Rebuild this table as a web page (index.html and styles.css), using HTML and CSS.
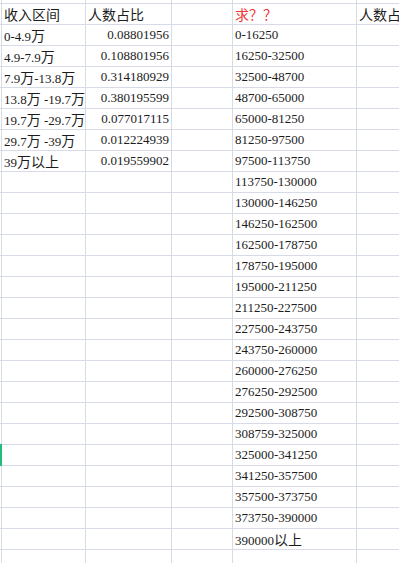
FILE: index.html
```html
<!DOCTYPE html>
<html lang="zh-CN">
<head>
<meta charset="utf-8">
<title>收入区间</title>
<link rel="stylesheet" href="styles.css">
</head>
<body>
<div class="sheet">
  <div class="row-sel"></div>
  <div class="grid">
    <div></div><div></div><div></div><div></div><div></div><div></div>

    <div></div><div class="c"><span class="zh">收入区间</span></div><div class="c"><span class="zh">人数占比</span></div><div></div><div class="c red"><span class="zh">求？？</span></div><div class="c"><span class="zh">人数占比</span></div>

    <div></div><div class="c">0-4.9<span class="zh">万</span></div><div class="c num">0.08801956</div><div></div><div class="c">0-16250</div><div></div>
    <div></div><div class="c">4.9-7.9<span class="zh">万</span></div><div class="c num">0.108801956</div><div></div><div class="c">16250-32500</div><div></div>
    <div></div><div class="c">7.9<span class="zh">万</span>-13.8<span class="zh">万</span></div><div class="c num">0.314180929</div><div></div><div class="c">32500-48700</div><div></div>
    <div></div><div class="c">13.8<span class="zh">万</span> -19.7<span class="zh">万</span></div><div class="c num">0.380195599</div><div></div><div class="c">48700-65000</div><div></div>
    <div></div><div class="c">19.7<span class="zh">万</span> -29.7<span class="zh">万</span></div><div class="c num">0.077017115</div><div></div><div class="c">65000-81250</div><div></div>
    <div></div><div class="c">29.7<span class="zh">万</span> -39<span class="zh">万</span></div><div class="c num">0.012224939</div><div></div><div class="c">81250-97500</div><div></div>
    <div></div><div class="c">39<span class="zh">万以上</span></div><div class="c num">0.019559902</div><div></div><div class="c">97500-113750</div><div></div>

    <div></div><div></div><div></div><div></div><div class="c">113750-130000</div><div></div>
    <div></div><div></div><div></div><div></div><div class="c">130000-146250</div><div></div>
    <div></div><div></div><div></div><div></div><div class="c">146250-162500</div><div></div>
    <div></div><div></div><div></div><div></div><div class="c">162500-178750</div><div></div>
    <div></div><div></div><div></div><div></div><div class="c">178750-195000</div><div></div>
    <div></div><div></div><div></div><div></div><div class="c">195000-211250</div><div></div>
    <div></div><div></div><div></div><div></div><div class="c">211250-227500</div><div></div>
    <div></div><div></div><div></div><div></div><div class="c">227500-243750</div><div></div>
    <div></div><div></div><div></div><div></div><div class="c">243750-260000</div><div></div>
    <div></div><div></div><div></div><div></div><div class="c">260000-276250</div><div></div>
    <div></div><div></div><div></div><div></div><div class="c">276250-292500</div><div></div>
    <div></div><div></div><div></div><div></div><div class="c">292500-308750</div><div></div>
    <div></div><div></div><div></div><div></div><div class="c">308759-325000</div><div></div>
    <div></div><div></div><div></div><div></div><div class="c">325000-341250</div><div></div>
    <div></div><div></div><div></div><div></div><div class="c">341250-357500</div><div></div>
    <div></div><div></div><div></div><div></div><div class="c">357500-373750</div><div></div>
    <div></div><div></div><div></div><div></div><div class="c">373750-390000</div><div></div>
    <div></div><div></div><div></div><div></div><div class="c">390000<span class="zh">以上</span></div><div></div>

    <div></div><div></div><div></div><div></div><div></div><div></div>
  </div>
</div>
</body>
</html>
```

FILE: styles.css
```css
html, body {
  margin: 0;
  padding: 0;
  background: #ffffff;
  overflow: hidden;
}

.sheet {
  position: relative;
  width: 399px;
  height: 563px;
  overflow: hidden;
}

.grid {
  display: grid;
  width: 399px;
  grid-template-columns: 1px 83px 85px 60px 123px 1fr;
  grid-template-rows: 3px repeat(27, 20px);
  gap: 1px;
  background: #d6dbe7;
  font-family: "Liberation Serif", "Noto Sans CJK SC", serif;
  font-size: 13px;
  color: #1c1c1c;
}

.grid > div {
  background: #ffffff;
  overflow: hidden;
  white-space: nowrap;
  line-height: 20px;
}

.c {
  padding: 0 2px;
}

.num {
  text-align: right;
}

.red {
  color: #f03232;
}

.zh {
  font-family: "Noto Sans CJK SC", sans-serif;
  font-size: 14px;
  font-weight: 400;
}

.row-sel {
  position: absolute;
  left: 0;
  top: 444px;
  width: 2px;
  height: 22px;
  background: #22bd7e;
}
```
